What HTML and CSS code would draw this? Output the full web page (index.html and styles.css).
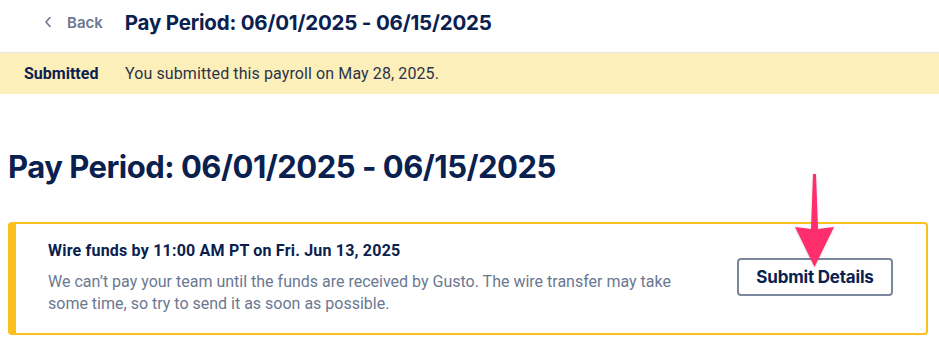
FILE: index.html
```html
<!DOCTYPE html>
<html>
<head>
  <title>Pay Period</title>
  <meta charset="UTF-8">
  <link rel="stylesheet" href="styles.css">
</head>
<body>
  <header class="topbar">
    <a class="back-link" href="#">
      <svg class="chevron" width="8" height="12" viewBox="0 0 8 12"><path d="M6 1.5 L2 6 L6 10.5" fill="none" stroke="#6b7891" stroke-width="1.6" stroke-linecap="round" stroke-linejoin="round"/></svg>
      <span>Back</span>
    </a>
    <h1 class="topbar-title">Pay Period: 06/01/2025 - 06/15/2025</h1>
  </header>

  <div class="status-banner">
    <span class="status-label">Submitted</span>
    <span class="status-text">You submitted this payroll on May 28, 2025.</span>
  </div>

  <main class="content">
    <h2 class="page-title">Pay Period: 06/01/2025 - 06/15/2025</h2>

    <div class="notice">
      <div class="notice-body">
        <div class="notice-title">Wire funds by 11:00 AM PT on Fri. Jun 13, 2025</div>
        <p class="notice-text">We can’t pay your team until the funds are received by Gusto. The wire transfer may take some time, so try to send it as soon as possible.</p>
      </div>
      <div class="notice-action">
        <button class="btn-outline">Submit Details</button>
        <svg class="pointer-arrow" width="40" height="96" viewBox="0 0 40 96">
          <path d="M18 1 L21 1 L23 56 Q30 55 39 54 L19.5 94 L0 54 Q9 55 16 56 Z" fill="#ff2e6c"/>
        </svg>
      </div>
    </div>
  </main>
</body>
</html>
```

FILE: styles.css
```css
:root {
  --navy: #0a2150;
  --slate: #6b7891;
  --banner-bg: #fdefb9;
  --warning: #fbbf1e;
}

body {
  margin: 0;
  font-family: Roboto, 'Noto Sans', sans-serif;
  color: var(--navy);
  background: white;
}

.topbar {
  display: flex;
  align-items: center;
  height: 52px;
  padding-left: 44px;
  border-bottom: 1px solid #e6e6e6;
}

.back-link {
  display: flex;
  align-items: center;
  gap: 15px;
  color: var(--slate);
  text-decoration: none;
  font-family: Inter, sans-serif;
  font-weight: 600;
  font-size: 15px;
  margin-right: 22px;
  margin-top: -8px;
}

.topbar-title {
  margin: -8px 0 0;
  font-family: Inter, sans-serif;
  font-size: 20.5px;
  font-weight: 700;
  letter-spacing: -0.2px;
}

.status-banner {
  display: flex;
  align-items: center;
  height: 41px;
  padding-left: 24px;
  background: var(--banner-bg);
  font-size: 16px;
}

.status-label {
  font-weight: 700;
  width: 101px;
}

.status-text {
  color: #2b344a;
  letter-spacing: 0.1px;
}

.content {
  padding: 0 11px 0 8px;
}

.page-title {
  margin: 54px 0 37px;
  font-family: Inter, sans-serif;
  font-size: 31px;
  font-weight: 700;
  letter-spacing: -0.5px;
}

.notice {
  display: flex;
  align-items: center;
  border: 2px solid var(--warning);
  border-left-width: 8px;
  border-radius: 4px;
  padding: 17px 33px 18px 32px;
}

.notice-body {
  flex: 1;
}

.notice-title {
  font-weight: 700;
  font-size: 16px;
  letter-spacing: 0.2px;
  margin-bottom: 11px;
}

.notice-text {
  margin: 0;
  max-width: 650px;
  font-size: 16px;
  line-height: 22px;
  color: var(--slate);
}

.notice-action {
  position: relative;
  margin-top: -3px;
}

.btn-outline {
  background: white;
  border: 2px solid #7b879c;
  border-radius: 4px;
  padding: 0 16px;
  width: 156px;
  height: 38px;
  font-family: Inter, sans-serif;
  font-weight: 700;
  font-size: 17px;
  letter-spacing: -0.2px;
  color: var(--navy);
}

.pointer-arrow {
  position: absolute;
  left: 58px;
  top: -85px;
  filter: drop-shadow(0 1px 1px rgba(0, 0, 0, 0.15));
}
```
